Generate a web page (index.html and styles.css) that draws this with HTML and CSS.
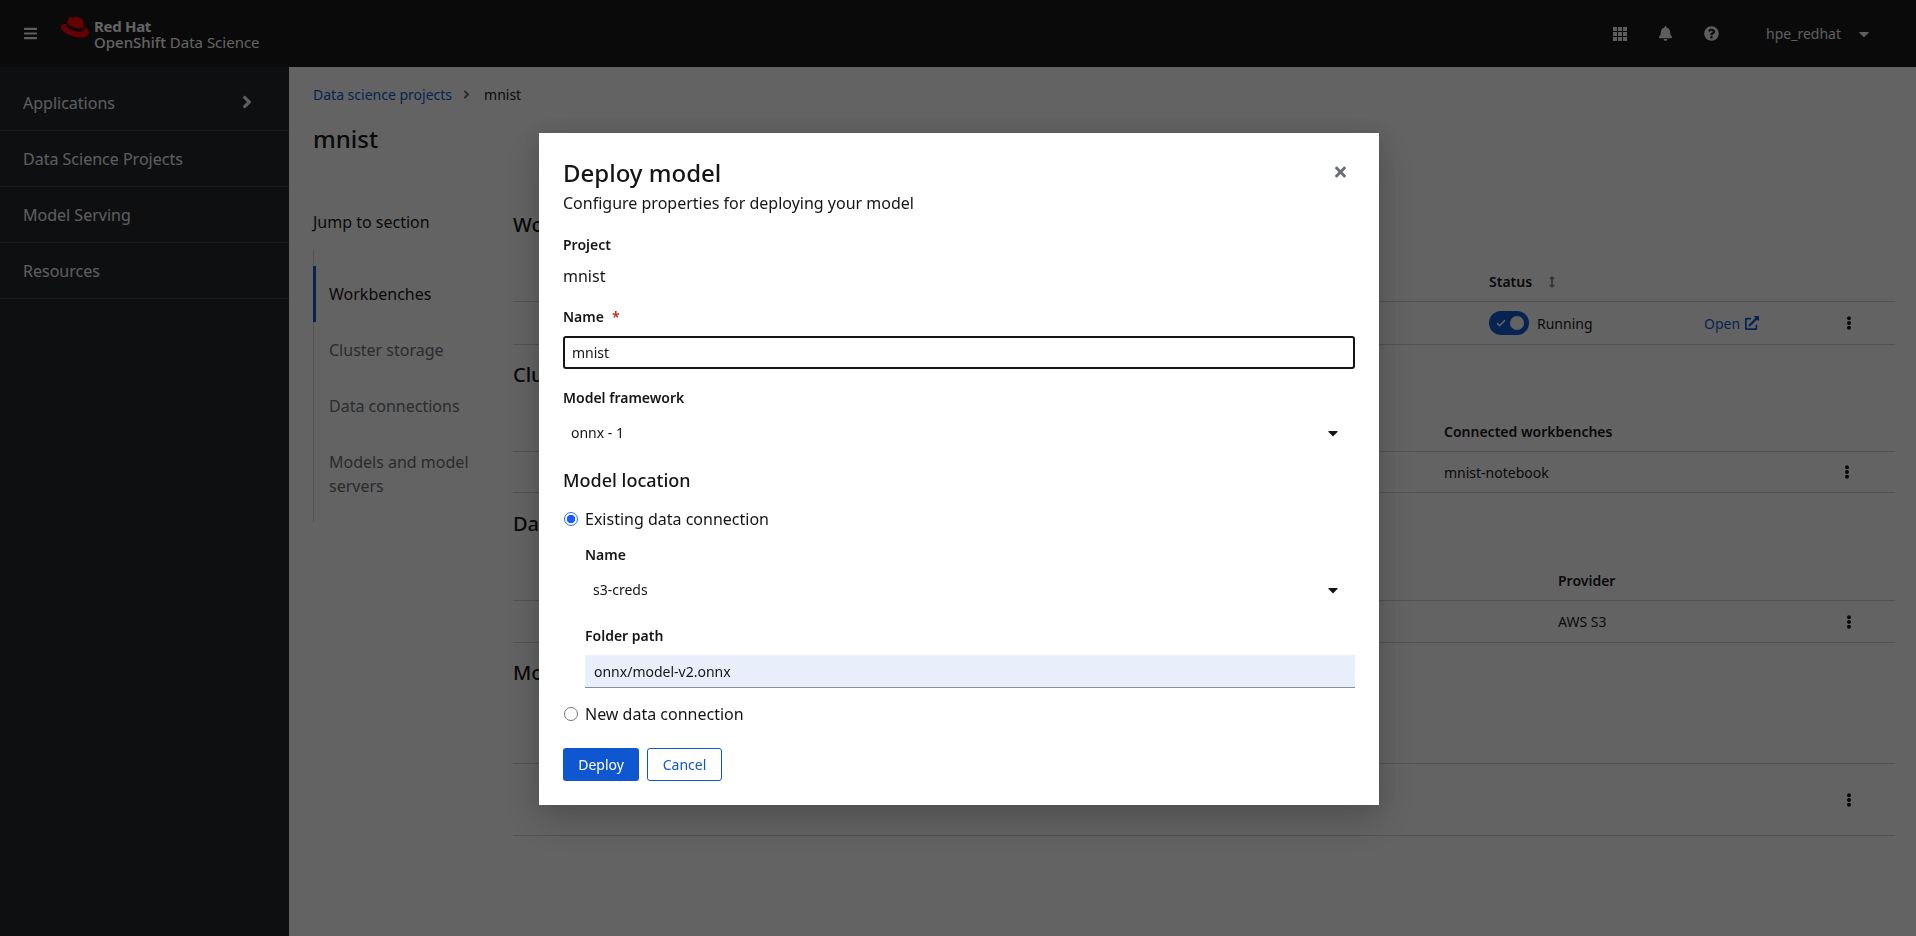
FILE: index.html
```html
<!DOCTYPE html>
<html lang="en">
<head>
<meta charset="utf-8">
<title>Deploy model</title>
<link rel="stylesheet" href="styles.css">
</head>
<body>
<svg class="sprite" width="0" height="0" aria-hidden="true">
  <symbol id="i-kebab" viewBox="0 0 192 512"><path d="M96 184c39.8 0 72 32.2 72 72s-32.2 72-72 72-72-32.2-72-72 32.2-72 72-72zM24 80c0 39.8 32.2 72 72 72s72-32.2 72-72S135.8 8 96 8 24 40.2 24 80zm0 352c0 39.8 32.2 72 72 72s72-32.2 72-72-32.2-72-72-72-72 32.2-72 72z"/></symbol>
  <symbol id="i-caret" viewBox="0 0 320 512"><path d="M31.3 192h257.3c17.8 0 26.7 21.5 14.1 34.1L174.1 354.8c-7.8 7.8-20.5 7.8-28.3 0L17.2 226.1C4.6 213.5 13.5 192 31.3 192z"/></symbol>
  <symbol id="i-angle" viewBox="0 0 256 512"><path d="M224.3 273l-136 136c-9.4 9.4-24.6 9.4-33.9 0l-22.6-22.6c-9.4-9.4-9.4-24.6 0-33.9l96.4-96.4-96.4-96.4c-9.4-9.4-9.4-24.6 0-33.9L54.3 103c9.4-9.4 24.6-9.4 33.9 0l136 136c9.5 9.4 9.5 24.6.1 34z"/></symbol>
</svg>

<header class="topbar">
  <svg class="bars" viewBox="0 0 448 512"><path d="M16 132h416c8.837 0 16-7.163 16-16V76c0-8.837-7.163-16-16-16H16C7.163 60 0 67.163 0 76v40c0 8.837 7.163 16 16 16zm0 160h416c8.837 0 16-7.163 16-16v-40c0-8.837-7.163-16-16-16H16c-8.837 0-16 7.163-16 16v40c0 8.837 7.163 16 16 16zm0 160h416c8.837 0 16-7.163 16-16v-40c0-8.837-7.163-16-16-16H16c-8.837 0-16 7.163-16 16v40c0 8.837 7.163 16 16 16z"/></svg>
  <div class="brand">
    <svg class="hat" viewBox="0 0 24 24"><path d="M16.009 13.386c1.577 0 3.86-.326 3.86-2.202a1.765 1.765 0 0 0-.04-.431l-.94-4.08c-.216-.898-.406-1.305-1.982-2.093-1.223-.625-3.888-1.658-4.676-1.658-.733 0-.947.946-1.822.946-.842 0-1.467-.706-2.255-.706-.757 0-1.25.515-1.63 1.576 0 0-1.06 2.99-1.197 3.424a.81.81 0 0 0-.028.245c0 1.162 4.577 4.974 10.71 4.974m4.101-1.435c.218 1.032.218 1.14.218 1.277 0 1.765-1.984 2.745-4.593 2.745-5.895.004-11.06-3.451-11.06-5.734a2.326 2.326 0 0 1 .19-.925C2.746 9.415 0 9.794 0 12.217c0 3.969 9.405 8.861 16.851 8.861 5.71 0 7.149-2.582 7.149-4.62 0-1.605-1.387-3.425-3.887-4.512"/></svg>
    <div class="brand-text">
      <div class="brand-top">Red Hat</div>
      <div class="brand-sub">OpenShift <span class="brand-thin">Data Science</span></div>
    </div>
  </div>
  <div class="tools">
    <svg class="tool grid" viewBox="0 0 14 14"><rect x="0" y="0" width="4" height="4"/><rect x="5" y="0" width="4" height="4"/><rect x="10" y="0" width="4" height="4"/><rect x="0" y="5" width="4" height="4"/><rect x="5" y="5" width="4" height="4"/><rect x="10" y="5" width="4" height="4"/><rect x="0" y="10" width="4" height="4"/><rect x="5" y="10" width="4" height="4"/><rect x="10" y="10" width="4" height="4"/></svg>
    <svg class="tool bell" viewBox="0 0 448 512"><path d="M224 512c35.32 0 63.97-28.65 63.97-64H160.03c0 35.35 28.65 64 63.97 64zm215.39-149.71c-19.32-20.76-55.47-51.99-55.47-154.29 0-77.7-54.48-139.9-127.94-155.16V32c0-17.67-14.32-32-31.98-32s-31.98 14.33-31.98 32v20.84C118.56 68.1 64.08 130.3 64.08 208c0 102.3-36.15 133.53-55.47 154.29-6 6.45-8.66 14.16-8.61 21.71.11 16.4 12.98 32 32.1 32h383.8c19.12 0 32-15.6 32.1-32 .05-7.55-2.61-15.27-8.61-21.71z"/></svg>
    <svg class="tool help" viewBox="0 0 512 512"><path d="M504 256c0 136.997-111.043 248-248 248S8 392.997 8 256C8 119.083 119.043 8 256 8s248 111.083 248 248zM262.655 90c-54.497 0-89.255 22.957-116.549 63.758-3.536 5.286-2.353 12.415 2.715 16.258l34.699 26.31c5.205 3.947 12.621 3.008 16.665-2.122 17.864-22.658 30.113-35.797 57.303-35.797 20.429 0 45.698 13.148 45.698 32.958 0 14.976-12.363 22.667-32.534 33.976C247.128 238.528 216 254.941 216 296v4c0 6.627 5.373 12 12 12h56c6.627 0 12-5.373 12-12v-1.333c0-28.462 83.186-29.647 83.186-106.667 0-58.002-60.165-102-116.531-102zM256 338c-25.365 0-46 20.635-46 46 0 25.364 20.635 46 46 46s46-20.636 46-46c0-25.365-20.635-46-46-46z"/></svg>
    <span class="user">hpe_redhat</span>
    <svg class="user-caret"><use href="#i-caret"/></svg>
  </div>
</header>

<div class="shell">
  <nav class="sidebar">
    <div class="side-item">Applications<svg class="side-angle"><use href="#i-angle"/></svg></div>
    <div class="side-item">Data Science Projects</div>
    <div class="side-item">Model Serving</div>
    <div class="side-item">Resources</div>
  </nav>
  <main class="main">
    <div class="crumbs"><a class="crumb-link">Data science projects</a><svg class="crumb-angle"><use href="#i-angle"/></svg><span>mnist</span></div>
    <h1 class="page-title">mnist</h1>
    <div class="body">
      <aside class="jump">
        <div class="jump-title">Jump to section</div>
        <ul class="jump-list">
          <li class="jump-item active">Workbenches</li>
          <li class="jump-item">Cluster storage</li>
          <li class="jump-item">Data connections</li>
          <li class="jump-item">Models and model servers</li>
        </ul>
      </aside>
      <div class="sections">
        <section class="sec s1">
          <h2 class="sec-title">Workbenches</h2>
          <div class="t-head t-work"><span></span><span class="th status-th">Status<svg class="sort" viewBox="0 0 256 512"><path d="M214.059 377.941H168V134.059h46.059c21.382 0 32.09-25.851 16.971-40.971L144.971 7.029c-9.373-9.373-24.568-9.373-33.941 0L24.971 93.088c-15.119 15.119-4.411 40.971 16.971 40.971H88v243.882H41.941c-21.382 0-32.09 25.851-16.971 40.971l86.059 86.059c9.373 9.373 24.568 9.373 33.941 0l86.059-86.059c15.119-15.119 4.411-40.971-16.971-40.971z"/></svg></span></div>
          <div class="t-row t-work">
            <span></span>
            <span class="running"><span class="toggle"><svg class="check" viewBox="0 0 12 10"><path d="M1 5.2 4.3 8.4 11 1.6"/></svg><span class="knob"></span></span>Running</span>
            <a class="open">Open<svg class="ext" viewBox="0 0 512 512"><path d="M432,320H400a16,16,0,0,0-16,16V448H64V128H208a16,16,0,0,0,16-16V80a16,16,0,0,0-16-16H48A48,48,0,0,0,0,112V464a48,48,0,0,0,48,48H400a48,48,0,0,0,48-48V336A16,16,0,0,0,432,320ZM488,0h-128c-21.37,0-32.05,25.91-17,41l35.73,35.73L135,320.37a24,24,0,0,0,0,34L157.67,377a24,24,0,0,0,34,0L435.28,133.32,471,169c15,15,41,4.5,41-17V24A24,24,0,0,0,488,0Z"/></svg></a>
            <svg class="kebab"><use href="#i-kebab"/></svg>
          </div>
        </section>
        <section class="sec s2">
          <h2 class="sec-title">Cluster storage</h2>
          <div class="t-head t-storage"><span></span><span class="th">Connected workbenches</span></div>
          <div class="t-row t-storage"><span></span><span>mnist-notebook</span><svg class="kebab"><use href="#i-kebab"/></svg></div>
        </section>
        <section class="sec s3">
          <h2 class="sec-title">Data connections</h2>
          <div class="t-head t-data"><span></span><span class="th">Provider</span></div>
          <div class="t-row t-data"><span></span><span>AWS S3</span><svg class="kebab"><use href="#i-kebab"/></svg></div>
        </section>
        <section class="sec s4">
          <h2 class="sec-title">Models and model servers</h2>
          <div class="t-head t-data"></div>
          <div class="t-row t-data"><span></span><span></span><svg class="kebab"><use href="#i-kebab"/></svg></div>
        </section>
      </div>
    </div>
  </main>
</div>

<div class="backdrop">
  <div class="modal">
    <svg class="close" viewBox="0 0 352 512"><path d="M242.72 256l100.07-100.07c12.28-12.28 12.28-32.19 0-44.48l-22.24-22.24c-12.28-12.28-32.19-12.28-44.48 0L176 189.28 75.93 89.21c-12.28-12.28-32.19-12.28-44.48 0L9.21 111.45c-12.28 12.28-12.28 32.19 0 44.48L109.28 256 9.21 356.07c-12.28 12.28-12.28 32.19 0 44.48l22.24 22.24c12.28 12.28 32.2 12.28 44.48 0L176 322.72l100.07 100.07c12.28 12.28 32.2 12.28 44.48 0l22.24-22.24c12.28-12.28 12.28-32.19 0-44.48L242.72 256z"/></svg>
    <h2 class="m-title">Deploy model</h2>
    <p class="m-sub">Configure properties for deploying your model</p>
    <div class="label m-project">Project</div>
    <div class="static">mnist</div>
    <div class="label m-name">Name<span class="req">*</span></div>
    <div class="input focus">mnist</div>
    <div class="label m-framework">Model framework</div>
    <div class="select">onnx - 1<svg class="sel-caret"><use href="#i-caret"/></svg></div>
    <h3 class="m-location">Model location</h3>
    <div class="radio-row first"><span class="radio on"></span>Existing data connection</div>
    <div class="nested">
      <div class="label m-conn">Name</div>
      <div class="select">s3-creds<svg class="sel-caret"><use href="#i-caret"/></svg></div>
      <div class="label m-folder">Folder path</div>
      <div class="input filled">onnx/model-v2.onnx</div>
    </div>
    <div class="radio-row second"><span class="radio"></span>New data connection</div>
    <div class="actions">
      <button class="btn primary">Deploy</button>
      <button class="btn secondary">Cancel</button>
    </div>
  </div>
</div>
</body>
</html>
```

FILE: styles.css
```css
* { box-sizing: border-box; }
html, body { margin: 0; height: 100%; overflow: hidden; }
body { font-family: "Noto Sans", "Inter", sans-serif; font-size: 16px; line-height: 24px; color: #151515; background: #fff; }
.sprite { position: absolute; }
svg { fill: currentColor; display: block; flex: none; }

.topbar { height: 67px; background: #151515; color: #f0f0f0; display: flex; align-items: center; }
.bars { width: 13px; height: 15px; margin-left: 24px; }
.brand { display: flex; margin-left: 24px; align-items: flex-start; }
.hat { width: 28px; height: 28px; color: #ff0000; margin-top: -5px; }
.brand-text { margin-left: 5px; color: #fff; }
.brand-top { font-size: 15px; line-height: 16px; font-weight: 700; letter-spacing: -.3px; }
.brand-sub { font-size: 15px; line-height: 16px; font-weight: 500; }
.brand-thin { font-weight: 400; }
.tools { margin-left: auto; display: flex; align-items: center; height: 100%; }
.tool { height: 15px; }
.grid { width: 14px; height: 14px; margin-right: 32px; }
.bell { width: 13px; margin-right: 32px; }
.help { width: 15px; }
.user { font-size: 14px; margin-left: 47px; }
.user-caret { width: 12px; height: 16px; margin: 0 46px 0 17px; }

.shell { display: flex; height: 869px; }
.sidebar { width: 289px; background: #212427; color: #f0f0f0; padding-top: 8px; flex: none; }
.side-item { height: 56px; border-bottom: 1px solid #3c3f42; padding-left: 23px; display: flex; align-items: center; position: relative; }
.side-angle { position: absolute; left: 241px; top: 17px; width: 12px; height: 20px; }

.main { flex: 1; padding: 17px 21px 0 24px; overflow: hidden; }
.crumbs { display: flex; align-items: center; font-size: 14px; line-height: 21px; }
.crumb-link { color: #0f57d1; }
.crumb-angle { width: 7px; height: 13px; margin: 0 14px 0 11px; color: #6a6e73; }
.page-title { margin: 16px 0 0; font-size: 24px; line-height: 36px; font-weight: 500; }

.body { display: flex; margin-top: 53px; }
.jump { width: 200px; flex: none; }
.jump-title { line-height: 24px; }
.jump-list { list-style: none; margin: 16px 0 0; padding: 16px 0 8px; border-left: 1px solid #d2d2d2; width: 164px; }
.jump-item { padding: 16px 0 16px 15px; color: #6a6e73; position: relative; }
.jump-item.active { color: #151515; }
.jump-item.active::before { content: ""; position: absolute; left: -1px; top: 0; bottom: 0; width: 3px; background: #0f57d1; }

.sections { flex: 1; }
.sec-title { margin: 0; font-size: 20px; line-height: 30px; font-weight: 500; }
.s2 { margin-top: 15px; }
.s3 { margin-top: 16px; }
.s4 { margin-top: 15px; }
.t-head, .t-row { display: grid; border-bottom: 1px solid #d2d2d2; font-size: 14px; line-height: 21px; align-items: center; }
.t-head { height: 62px; align-items: end; padding-bottom: 9px; }
.t-row { height: 42px; }
.s1 .t-row { height: 43px; }
.s2 .t-row { height: 41px; }
.s4 .t-head { height: 76px; }
.s4 .t-row { height: 72px; }
.t-work { grid-template-columns: 976px 215px 142px 4px; }
.t-storage { grid-template-columns: 931px 400px 4px; }
.t-data { grid-template-columns: 1045px 288px 4px; }
.th { font-weight: 600; }
.status-th { display: flex; align-items: center; }
.sort { width: 6px; height: 14px; margin-left: 17px; color: #8a8d90; }
.running { display: flex; align-items: center; }
.toggle { width: 40px; height: 24px; border-radius: 12px; background: #0f57d1; margin-right: 8px; position: relative; display: block; }
.check { position: absolute; left: 7px; top: 8px; width: 10px; height: 8px; fill: none; stroke: #fff; stroke-width: 2; }
.knob { position: absolute; right: 5px; top: 5px; width: 14px; height: 14px; border-radius: 50%; background: #fff; }
.open { display: flex; align-items: center; color: #0f57d1; }
.ext { width: 14px; height: 14px; margin-left: 5px; }
.kebab { width: 6px; height: 14px; color: #151515; }

.backdrop { position: fixed; inset: 0; background: rgba(3, 3, 3, .62); }
.modal { position: absolute; left: 539px; top: 133px; width: 840px; height: 672px; padding: 24px; background: #fff; box-shadow: 0 16px 32px rgba(3, 3, 3, .16), 0 0 16px rgba(3, 3, 3, .1); }
.close { position: absolute; left: 795px; top: 31px; width: 13px; height: 16px; color: #6a6e73; }
.m-title { margin: 0; font-size: 24px; line-height: 31px; font-weight: 500; }
.m-sub { margin: 3px 0 0; }
.label { font-size: 14px; line-height: 21px; font-weight: 600; }
.m-project { margin-top: 19px; }
.static { margin-top: 9px; }
.m-name { margin-top: 18px; }
.req { color: #c9190b; margin-left: 8px; }
.input { height: 33px; font-size: 14px; line-height: 29px; }
.input.focus { margin-top: 9px; border: 2px solid #151515; border-radius: 3px; padding-left: 7px; }
.input.filled { margin-top: 9px; background: #e8eefa; border-bottom: 1px solid #8a8d90; padding: 2px 0 0 9px; }
.m-framework { margin-top: 18px; }
.select { margin-top: 7px; height: 36px; font-size: 14px; line-height: 36px; padding-left: 8px; position: relative; }
.sel-caret { position: absolute; right: 17px; top: 10px; width: 10px; height: 16px; color: #151515; }
.m-location { margin: 16px 0 0; font-size: 18px; line-height: 27px; font-weight: 500; }
.radio-row { display: flex; align-items: center; height: 24px; }
.radio-row.first { margin-top: 13px; }
.radio-row.second { margin-top: 14px; }
.radio { width: 14px; height: 14px; border-radius: 50%; border: 1px solid #767676; margin-left: 1px; margin-right: 7px; background: #fff; }
.radio.on { border: 1px solid #2a6cff; background: radial-gradient(circle, #1a5cff 0 4px, #fff 4.5px); }
.nested { padding-left: 22px; }
.m-conn { margin-top: 13px; }
.m-folder { margin-top: 17px; }
.actions { margin-top: 22px; display: flex; gap: 8px; }
.btn { height: 33px; padding: 0; font: inherit; font-size: 14px; border-radius: 3px; }
.btn.primary { width: 76px; background: #0f57d1; color: #fff; border: 0; }
.btn.secondary { width: 75px; background: #fff; color: #0f57d1; border: 1px solid #0f57d1; }
```
